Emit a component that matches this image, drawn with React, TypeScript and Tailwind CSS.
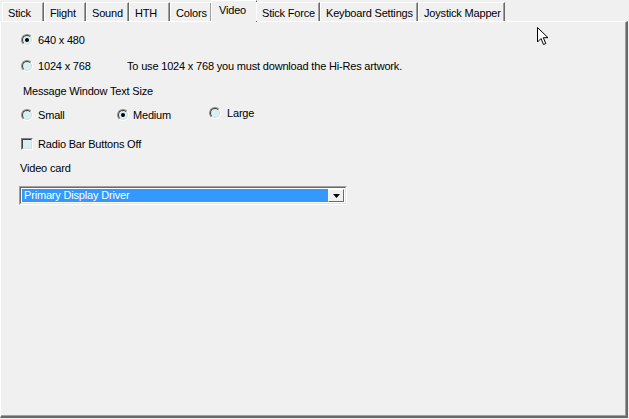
const tabs = [
  { label: "Stick", w: "w-[42px]" },
  { label: "Flight", w: "w-[42px]" },
  { label: "Sound", w: "w-[43px]" },
  { label: "HTH", w: "w-[41px]" },
  { label: "Colors", w: "w-[42px]" },
  { label: "Video", w: "w-[46px]", active: true },
  { label: "Stick Force", w: "w-[64px]" },
  { label: "Keyboard Settings", w: "w-[98px]" },
  { label: "Joystick Mapper", w: "w-[87px]" },
];

function Radio({ checked }: { checked?: boolean }) {
  return (
    <div className="w-[12px] h-[12px] shrink-0 rounded-full border border-t-[#8c8c8c] border-l-[#8c8c8c] border-b-white border-r-white">
      <div className="w-full h-full rounded-full border border-t-[#3c3c3c] border-l-[#3c3c3c] border-b-[#dcdcdc] border-r-[#dcdcdc] bg-[#d6f1ee] flex items-center justify-center">
        {checked && <div className="w-[4px] h-[4px] rounded-full bg-black" />}
      </div>
    </div>
  );
}

function Check() {
  return (
    <div className="w-[12px] h-[12px] shrink-0 border border-t-[#808080] border-l-[#808080] border-b-white border-r-white">
      <div className="w-full h-full border border-t-[#404040] border-l-[#404040] border-b-[#dcdcdc] border-r-[#dcdcdc] bg-[#d6f1ee]" />
    </div>
  );
}

function Cursor() {
  return (
    <svg width="14" height="20" viewBox="0 0 14 20" className="absolute left-[537px] top-[27px]">
      <path d="M0.5 0.5 L0.5 15 L4 11.5 L6.5 17.5 L8.8 16.5 L6.3 10.7 L11 10.7 Z" fill="#fff" stroke="#000" strokeWidth="1" />
    </svg>
  );
}

export default function App() {
  return (
    <div
      className="relative w-[629px] h-[419px] bg-[#f0f0f0] text-[11px] tracking-[-0.18px] text-black overflow-hidden flex flex-col"
      style={{ fontFamily: '"Liberation Sans", Arial, sans-serif' }}
    >
      {/* Tab strip */}
      <div className="flex items-end h-[22px] pl-[2px] relative z-10">
        {tabs.map((t) =>
          t.active ? (
            <div
              key={t.label}
              className={`${t.w} h-[22px] -mx-[1px] bg-[#f0f0f0] border-t border-l border-white border-r border-r-[#696969] pl-[7px] pt-[3px] leading-[13px]`}
            >
              {t.label}
            </div>
          ) : (
            <div
              key={t.label}
              className={`${t.w} h-[19px] mb-[1px] bg-[#f0f0f0] border-t border-l border-white border-r border-r-[#696969] pl-[5px] pt-[4px] leading-[13px] shadow-[inset_-1px_0_0_#a0a0a0]`}
            >
              {t.label}
            </div>
          )
        )}
      </div>

      {/* Panel */}
      <div className="flex-1 -mt-[1px] mr-[1px] mb-[1px] border-t border-l border-white border-r-2 border-r-[#696969] border-b-2 border-b-[#696969] shadow-[inset_-1px_-1px_0_#a0a0a0] flex flex-col pt-[11px] pl-[18px]">
        <div className="h-[14px] flex items-center ml-[2px]">
          <Radio checked />
          <span className="ml-[5px]">640 x 480</span>
        </div>

        <div className="h-[14px] flex items-center ml-[2px] mt-[12px]">
          <div className="w-[106px] flex items-center">
            <Radio />
            <span className="ml-[5px]">1024 x 768</span>
          </div>
          <span>To use 1024 x 768 you must download the Hi-Res artwork.</span>
        </div>

        <div className="h-[14px] flex items-center ml-[4px] mt-[11px]">Message Window Text Size</div>

        <div className="h-[14px] flex items-center ml-[2px] mt-[10px]">
          <div className="w-[96px] flex items-center">
            <Radio />
            <span className="ml-[5px]">Small</span>
          </div>
          <div className="w-[92px] flex items-center">
            <Radio checked />
            <span className="ml-[4px]">Medium</span>
          </div>
          <div className="flex items-center -translate-y-[2px]">
            <Radio />
            <span className="ml-[6px]">Large</span>
          </div>
        </div>

        <div className="h-[14px] flex items-center ml-[2px] mt-[15px]">
          <Check />
          <span className="ml-[5px]">Radio Bar Buttons Off</span>
        </div>

        <div className="h-[14px] flex items-center ml-[1px] mt-[10px]">Video card</div>

        <div className="mt-[11px] w-[328px] h-[19px] border border-t-[#a0a0a0] border-l-[#a0a0a0] border-b-white border-r-white">
          <div className="w-full h-full border border-t-[#696969] border-l-[#696969] border-b-[#e3e3e3] border-r-[#e3e3e3] bg-white flex items-center p-[1px]">
            <div className="flex-1 h-full bg-[#3399ff] text-white flex items-center pl-[2px] leading-none">
              Primary Display Driver
            </div>
            <div className="w-[16px] h-full bg-[#f0f0f0] border border-t-white border-l-white border-b-[#696969] border-r-[#696969] flex items-center justify-center">
              <svg width="7" height="4" viewBox="0 0 7 4">
                <path d="M0 0 H7 L3.5 4 Z" fill="#000" />
              </svg>
            </div>
          </div>
        </div>
      </div>

      <Cursor />
    </div>
  );
}
